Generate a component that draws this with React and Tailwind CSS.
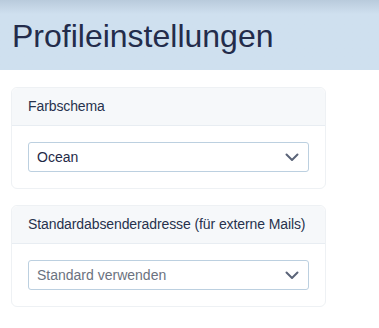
import React from "react";

const Chevron = () => (
  <svg width="16" height="16" viewBox="0 0 16 16" className="text-[#5b6478]">
    <path d="M2.5 5.5 L8 11 L13.5 5.5" fill="none" stroke="currentColor" strokeWidth="2" strokeLinecap="round" strokeLinejoin="round" />
  </svg>
);

const SettingCard = ({ title, value, placeholder }) => (
  <div className="w-[315px] rounded-md border border-[#eef1f4] bg-white mb-[16px]">
    <div className="h-[38px] flex items-center px-4 bg-[#f6f8fa] border-b border-[#e8edf2] rounded-t-md text-[14px] tracking-[-0.1px] whitespace-nowrap text-[#27324d]">
      {title}
    </div>
    <div className="px-4 py-4">
      <div className="h-[30px] flex items-center justify-between pl-2 pr-2 border border-[#bcd0e0] rounded-[3px] bg-white">
        <span className={"text-[14px] " + (placeholder ? "text-[#6b7280]" : "text-[#1f2a47]")}>{value}</span>
        <Chevron />
      </div>
    </div>
  </div>
);

export default function App() {
  return (
    <div className="w-[379px] h-[328px] bg-white" style={{ fontFamily: '"Liberation Sans", Arial, sans-serif' }}>
      <div className="h-[70px] flex items-center px-3 bg-gradient-to-b from-[#b9cbdc] via-[#cfe0ef] via-20% to-[#cfe0ef]">
        <h1 className="text-[32px] text-[#232c4b] leading-none mt-[2px]">Profileinstellungen</h1>
      </div>
      <div className="pt-[17px] pl-[11px]">
        <SettingCard title="Farbschema" value="Ocean" />
        <SettingCard title="Standardabsenderadresse (für externe Mails)" value="Standard verwenden" placeholder />
      </div>
    </div>
  );
}
